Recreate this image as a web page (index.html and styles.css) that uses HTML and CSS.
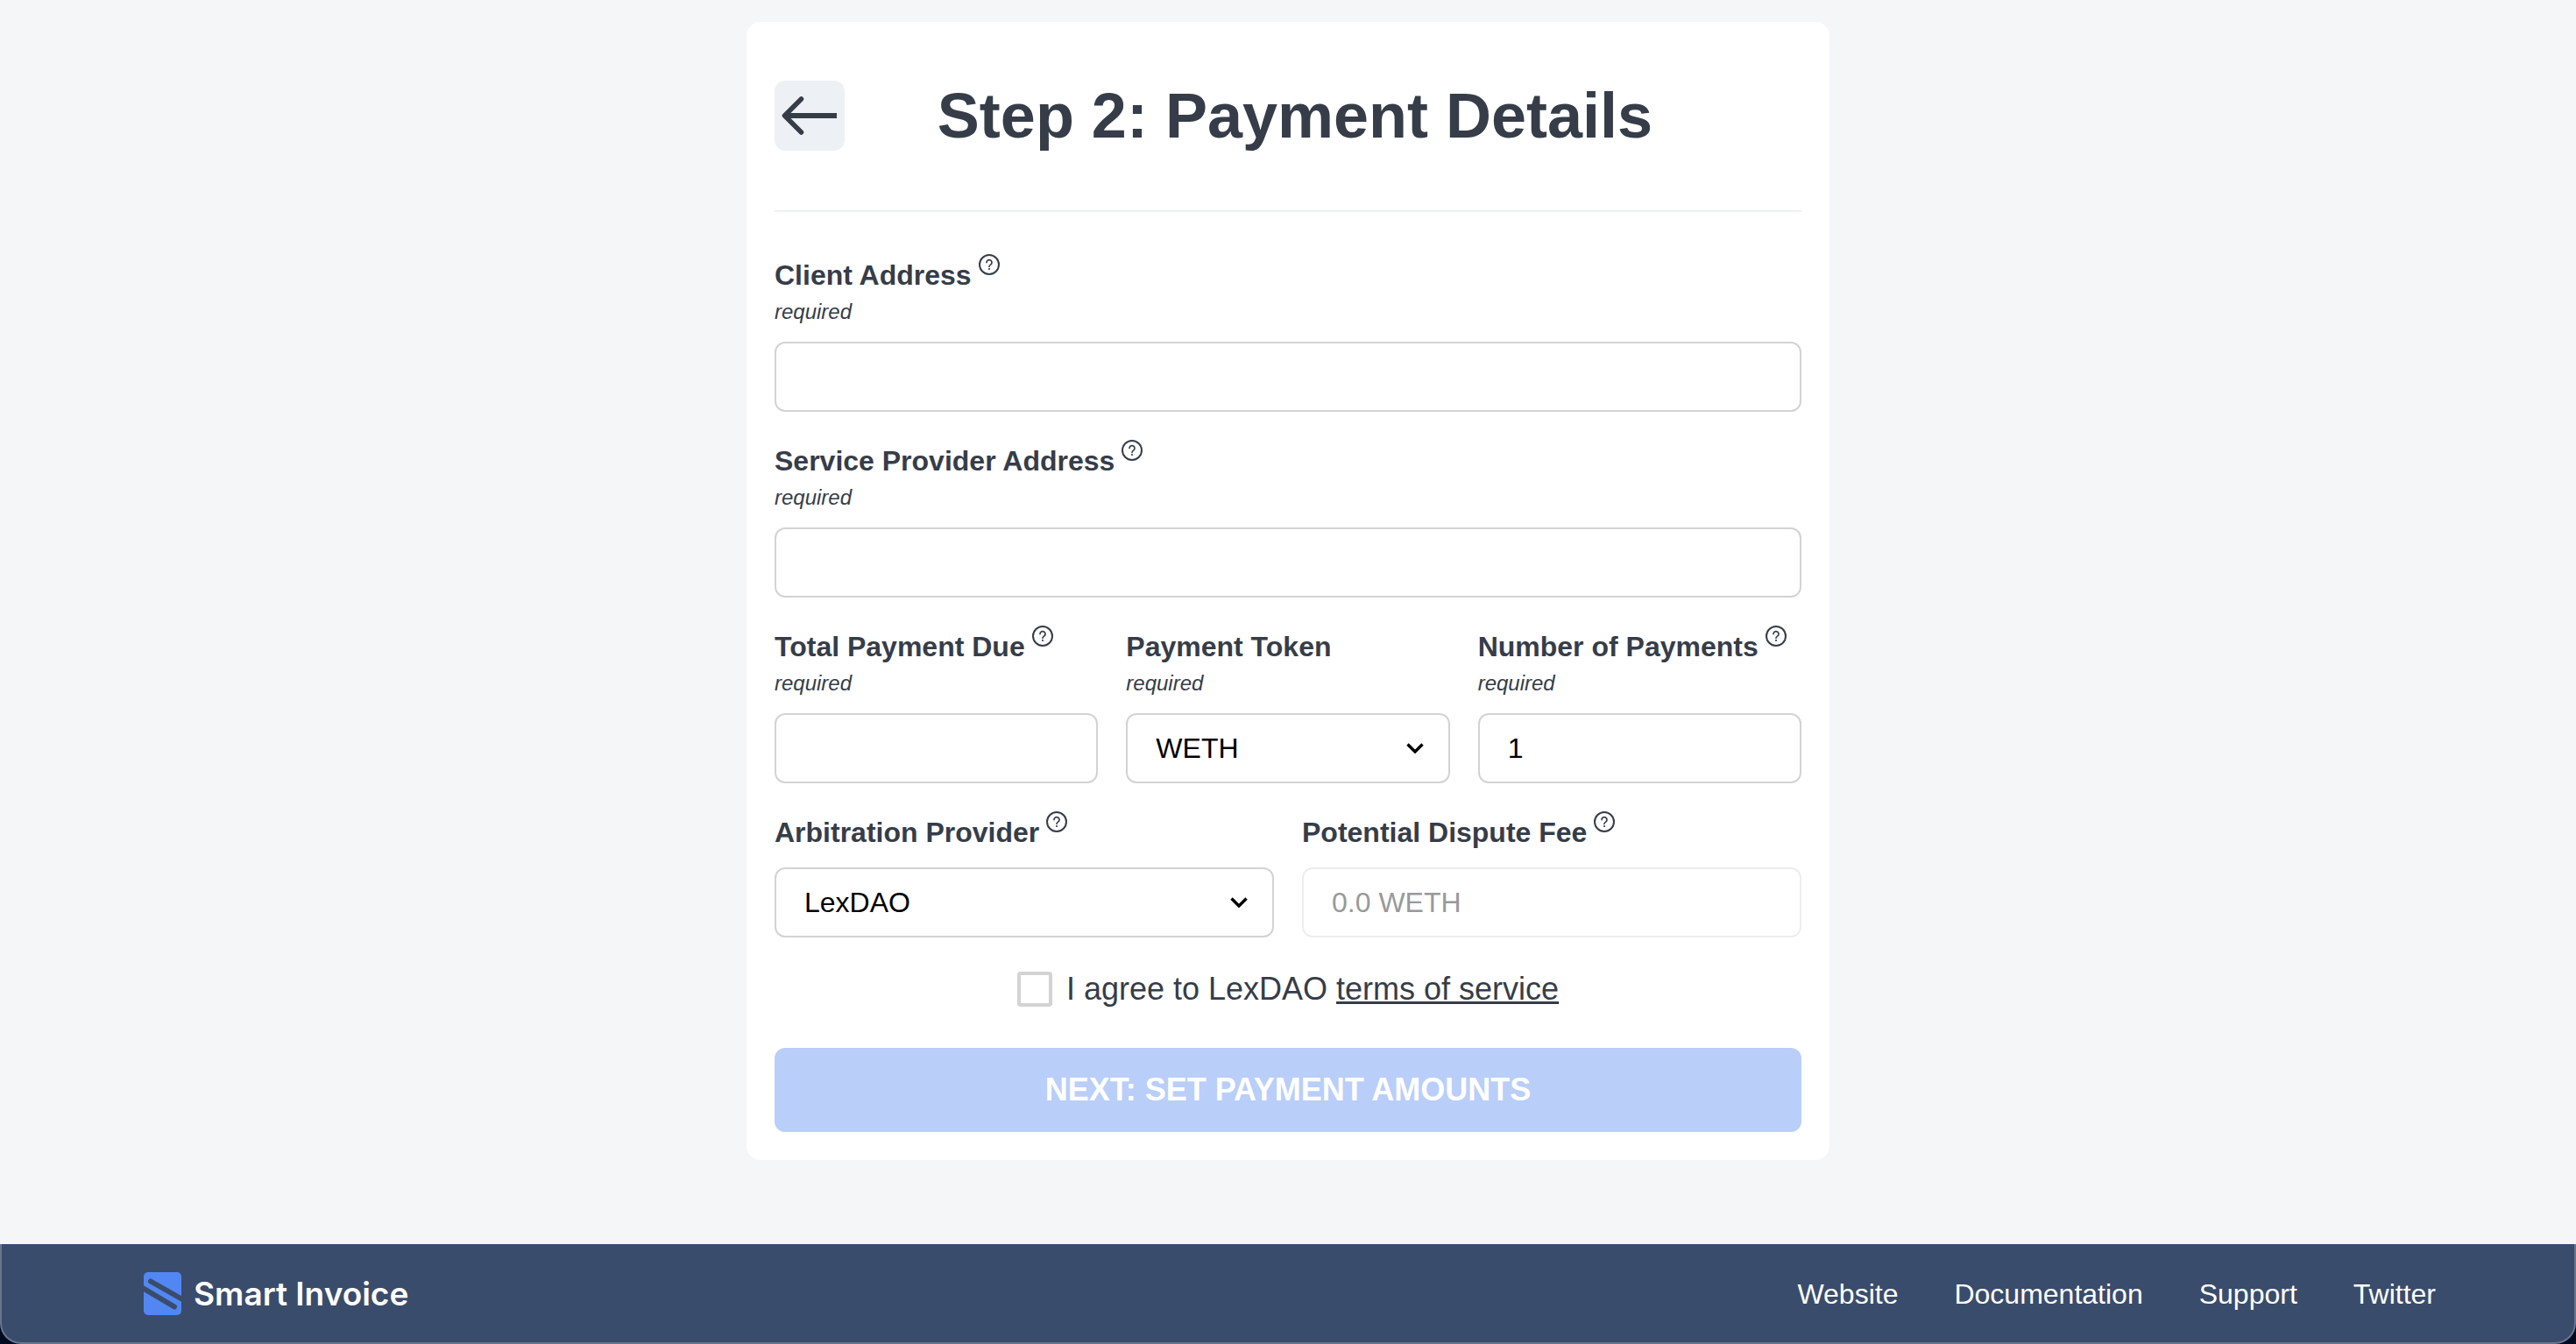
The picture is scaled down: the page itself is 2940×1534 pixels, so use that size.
FILE: index.html
```html
<!DOCTYPE html>
<html lang="en">
<head>
<meta charset="utf-8">
<meta name="viewport" content="width=device-width, initial-scale=1">
<title>Smart Invoice - Payment Details</title>
<link rel="stylesheet" href="styles.css">
</head>
<body>
<svg class="sprite" aria-hidden="true">
  <symbol id="help" viewBox="0 0 24 24">
    <circle cx="12" cy="12" r="11" fill="none" stroke="currentColor" stroke-width="2"/>
    <path d="M9 9.600a3 3 0 1 1 4.600 2.500c-1 .7-1.600 1.100-1.600 2.200" fill="none" stroke="currentColor" stroke-width="1.700" stroke-linecap="round"/>
    <circle cx="12" cy="17" r="1.100" fill="currentColor"/>
  </symbol>
  <symbol id="chevron" viewBox="0 0 20 12">
    <path d="M1.500 1.500 10 10l8.500-8.500" fill="none" stroke="currentColor" stroke-width="3.400"/>
  </symbol>
</svg>
<main class="page">
  <form class="card">
    <header class="card-header">
      <button class="back" type="button" aria-label="Back">
        <svg class="back-icon" viewBox="0 0 64 48" aria-hidden="true"><path d="M22.500 5 3.500 24l19 19" fill="none" stroke="currentColor" stroke-width="5.500" stroke-linecap="round" stroke-linejoin="round"/><path d="M4 24h59" stroke="currentColor" stroke-width="6"/></svg>
      </button>
      <h1 class="title">Step 2: Payment Details</h1>
    </header>

    <div class="fields">
      <div class="field">
        <div class="label-row"><label for="client">Client Address</label><svg class="help"><use href="#help"/></svg></div>
        <p class="required">required</p>
        <input class="control" id="client" type="text">
      </div>

      <div class="field">
        <div class="label-row"><label for="provider">Service Provider Address</label><svg class="help"><use href="#help"/></svg></div>
        <p class="required">required</p>
        <input class="control" id="provider" type="text">
      </div>

      <div class="row row-three">
        <div class="field">
          <div class="label-row"><label for="total">Total Payment Due</label><svg class="help"><use href="#help"/></svg></div>
          <p class="required">required</p>
          <input class="control" id="total" type="text">
        </div>
        <div class="field">
          <div class="label-row"><label for="token">Payment Token</label></div>
          <p class="required">required</p>
          <div class="select">
            <select class="control" id="token"><option>WETH</option></select>
            <svg class="chevron" aria-hidden="true"><use href="#chevron"/></svg>
          </div>
        </div>
        <div class="field">
          <div class="label-row"><label for="count">Number of Payments</label><svg class="help"><use href="#help"/></svg></div>
          <p class="required">required</p>
          <input class="control" id="count" type="text" value="1">
        </div>
      </div>

      <div class="row row-two">
        <div class="field">
          <div class="label-row"><label for="arbiter">Arbitration Provider</label><svg class="help"><use href="#help"/></svg></div>
          <div class="select">
            <select class="control" id="arbiter"><option>LexDAO</option></select>
            <svg class="chevron" aria-hidden="true"><use href="#chevron"/></svg>
          </div>
        </div>
        <div class="field">
          <div class="label-row"><label for="fee">Potential Dispute Fee</label><svg class="help"><use href="#help"/></svg></div>
          <input class="control control-disabled" id="fee" type="text" value="0.0 WETH" disabled>
        </div>
      </div>

      <div class="terms">
        <input class="checkbox" id="agree" type="checkbox">
        <label for="agree">I agree to LexDAO <a href="#terms">terms of service</a></label>
      </div>
    </div>

    <button class="next" type="submit" disabled>NEXT: SET PAYMENT AMOUNTS</button>
  </form>
</main>

<div class="footer-wrap">
  <footer class="footer">
    <a class="brand" href="#home">
      <svg class="brand-icon" viewBox="0 0 43 49" aria-hidden="true">
        <rect width="43" height="49" rx="5" fill="#5287f3"/>
        <path d="M8 10.500 45 31.500M-2 17.500 35 39.500" fill="none" stroke="#3a4c6b" stroke-width="6" stroke-linecap="round"/>
      </svg>
      <span>Smart Invoice</span>
    </a>
    <nav class="links">
      <a href="#website">Website</a>
      <a href="#docs">Documentation</a>
      <a href="#support">Support</a>
      <a href="#twitter">Twitter</a>
    </nav>
  </footer>
</div>
</body>
</html>
```
FILE: styles.css
```css
* {
  box-sizing: border-box;
}

body {
  margin: 0;
  min-height: 100vh;
  display: flex;
  flex-direction: column;
  background: #f5f6f8;
  color: #363d48;
  font-family: "Liberation Sans", Arial, sans-serif;
  font-size: 32px;
}

.sprite {
  display: none;
}

.page {
  flex: 1;
  padding: 25px 32px 96px;
}

.card {
  max-width: 1236px;
  margin: 0 auto;
  padding: 32px;
  border-radius: 16px;
  background: #fff;
}

.card-header {
  display: grid;
  grid-template-columns: 80px 1fr 64px;
  align-items: center;
  padding: 35px 0 68px;
  border-bottom: 2px solid #edf1f5;
}

.back {
  display: flex;
  align-items: center;
  justify-content: center;
  width: 80px;
  height: 80px;
  padding: 0;
  border: 0;
  border-radius: 12px;
  background: #edf1f6;
  color: inherit;
}

.back-icon {
  width: 64px;
  height: 48px;
}

.title {
  margin: 0;
  font-size: 72px;
  line-height: 78px;
  text-align: center;
}

.fields {
  display: flex;
  flex-direction: column;
  gap: 36px;
  padding: 52px 0 44px;
}

.row {
  display: grid;
  gap: 32px;
}

.row-three {
  grid-template-columns: repeat(3, 1fr);
}

.row-two {
  grid-template-columns: repeat(2, 1fr);
}

.label-row {
  display: flex;
  gap: 8px;
  padding-bottom: 4px;
  font-weight: bold;
  line-height: 40px;
  white-space: nowrap;
}

.help {
  width: 24px;
  height: 24px;
  margin-top: -4px;
}

.required {
  margin: 0;
  font-size: 24px;
  font-style: italic;
  line-height: 36px;
}

.control {
  display: block;
  width: 100%;
  height: 80px;
  margin: 16px 0 0;
  padding: 0 32px;
  border: 2px solid #d3d3d3;
  border-radius: 12px;
  background: #fff;
  color: #000;
  font: inherit;
  appearance: none;
}

.control-disabled {
  border-color: #ededed;
  color: #999;
}

.select {
  position: relative;
}

.chevron {
  position: absolute;
  right: 30px;
  bottom: 34px;
  width: 20px;
  height: 12px;
  color: #000;
  pointer-events: none;
}

.terms {
  display: flex;
  align-items: center;
  justify-content: center;
  gap: 16px;
  font-size: 36px;
  line-height: 46px;
}

.terms a {
  color: inherit;
}

.checkbox {
  width: 40px;
  height: 40px;
  margin: 0;
  border: 4px solid #d3d3d3;
  border-radius: 4px;
  appearance: none;
}

.next {
  display: block;
  width: 100%;
  height: 96px;
  border: 0;
  border-radius: 12px;
  background: #b9cef9;
  color: #fff;
  font: bold 36px "Liberation Sans", Arial, sans-serif;
}

.footer-wrap {
  background: #020a20;
}

.footer {
  display: flex;
  align-items: center;
  justify-content: space-between;
  padding: 32px 158px 31px 162px;
  border: 2px solid #69758c;
  border-top: 0;
  border-radius: 0 0 24px 24px;
  background: #3a4c6b;
}

.footer a {
  color: #fff;
  text-decoration: none;
}

.brand {
  display: flex;
  align-items: center;
  gap: 14px;
  font: 600 37px/49px Inter, sans-serif;
}

.brand-icon {
  width: 43px;
  height: 49px;
}

.links {
  display: flex;
  gap: 64px;
  line-height: 40px;
}
```
